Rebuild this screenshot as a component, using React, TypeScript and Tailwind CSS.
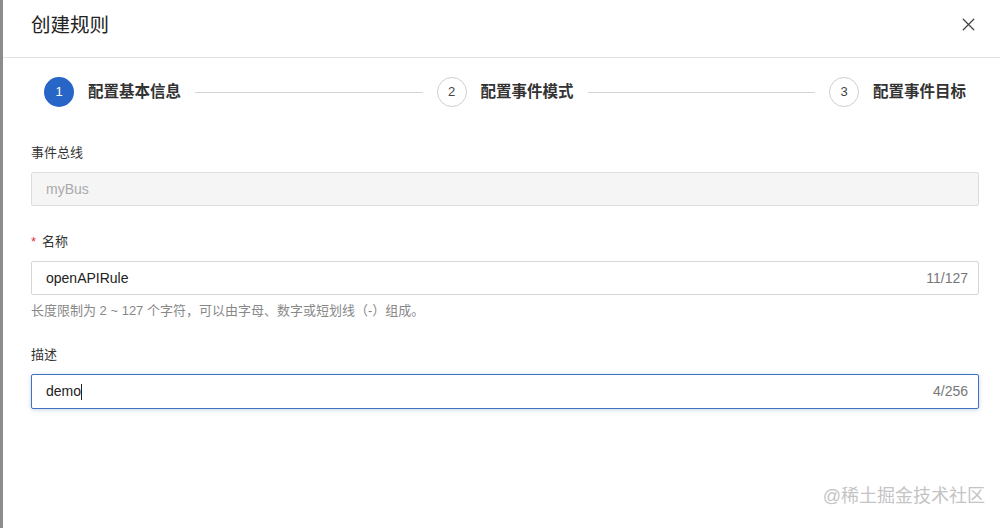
import React from 'react';
import { X } from 'lucide-react';

const font = { fontFamily: '"Liberation Sans", "Noto Sans CJK SC", sans-serif' };

const steps = ['配置基本信息', '配置事件模式', '配置事件目标'];

const Step = ({ n, label, active }: { n: number; label: string; active?: boolean }) => (
  <div className="flex items-center shrink-0">
    <div
      className={
        active
          ? 'w-[30px] h-[30px] rounded-full bg-[#2765c6] text-white flex items-center justify-center text-[13px]'
          : 'w-[30px] h-[30px] rounded-full border border-[#cfcfcf] text-[#444] flex items-center justify-center text-[13px]'
      }
    >
      {n}
    </div>
    <span className="ml-[14px] text-[15.5px] font-bold text-[#333]">{label}</span>
  </div>
);

const App: React.FC = () => {
  return (
    <div className="h-[528px] w-[1000px] flex bg-white overflow-hidden relative" style={font}>
      <div className="w-[3px] bg-[#8c8c8c] shrink-0" />
      <div className="flex-1 flex flex-col">
        <div className="h-[58px] border-b border-[#e3e3e3] flex items-center justify-between pl-[28px] pr-[21px] shrink-0">
          <h1 className="text-[19.5px] text-[#222] -mt-[6px]">创建规则</h1>
          <button className="text-[#444] -mt-[9px]">
            <X size={21} strokeWidth={1.5} />
          </button>
        </div>

        <div className="flex items-center pl-[41px] pr-[34px] mt-[19px]">
          {steps.map((s, i) => (
            <React.Fragment key={s}>
              <Step n={i + 1} label={s} active={i === 0} />
              {i < steps.length - 1 && <div className="flex-1 h-px bg-[#d4d4d4] mx-[14px]" />}
            </React.Fragment>
          ))}
        </div>

        <div className="pl-[28px] pr-[21px] flex flex-col text-[13px]">
          <label className="mt-[36px] leading-5 text-[#333]">事件总线</label>
          <div className="mt-[9px] h-[34px] border border-[#dcdcdc] bg-[#f5f5f5] rounded-[2px] flex items-center pl-[14px] text-[14px] text-[#aaa]">
            myBus
          </div>

          <label className="mt-[26px] leading-5 text-[#333]">
            <span className="text-[#d9363e] mr-[6px]">*</span>名称
          </label>
          <div className="mt-[9px] h-[34px] border border-[#d6d6d6] bg-white rounded-[2px] flex items-center justify-between pl-[14px] pr-[10px] text-[14px]">
            <span className="text-[#222]">openAPIRule</span>
            <span className="text-[#777]">11/127</span>
          </div>
          <p className="mt-[6px] leading-5 text-[#888]">长度限制为 2 ~ 127 个字符，可以由字母、数字或短划线（-）组成。</p>

          <label className="mt-[24px] leading-5 text-[#333]">描述</label>
          <div className="mt-[9px] h-[35px] border border-[#3f72bf] bg-white rounded-[2px] flex items-center justify-between pl-[14px] pr-[10px] text-[14px] shadow-[0_1px_4px_rgba(40,90,170,0.25)]">
            <span className="text-[#222] flex items-center">
              demo<span className="inline-block w-px h-[16px] bg-[#222]" />
            </span>
            <span className="text-[#777]">4/256</span>
          </div>
        </div>
      </div>

      <div className="absolute right-[15px] bottom-[18px] text-[18px] text-[#c4c4c4]">@稀土掘金技术社区</div>
    </div>
  );
};

export default App;
